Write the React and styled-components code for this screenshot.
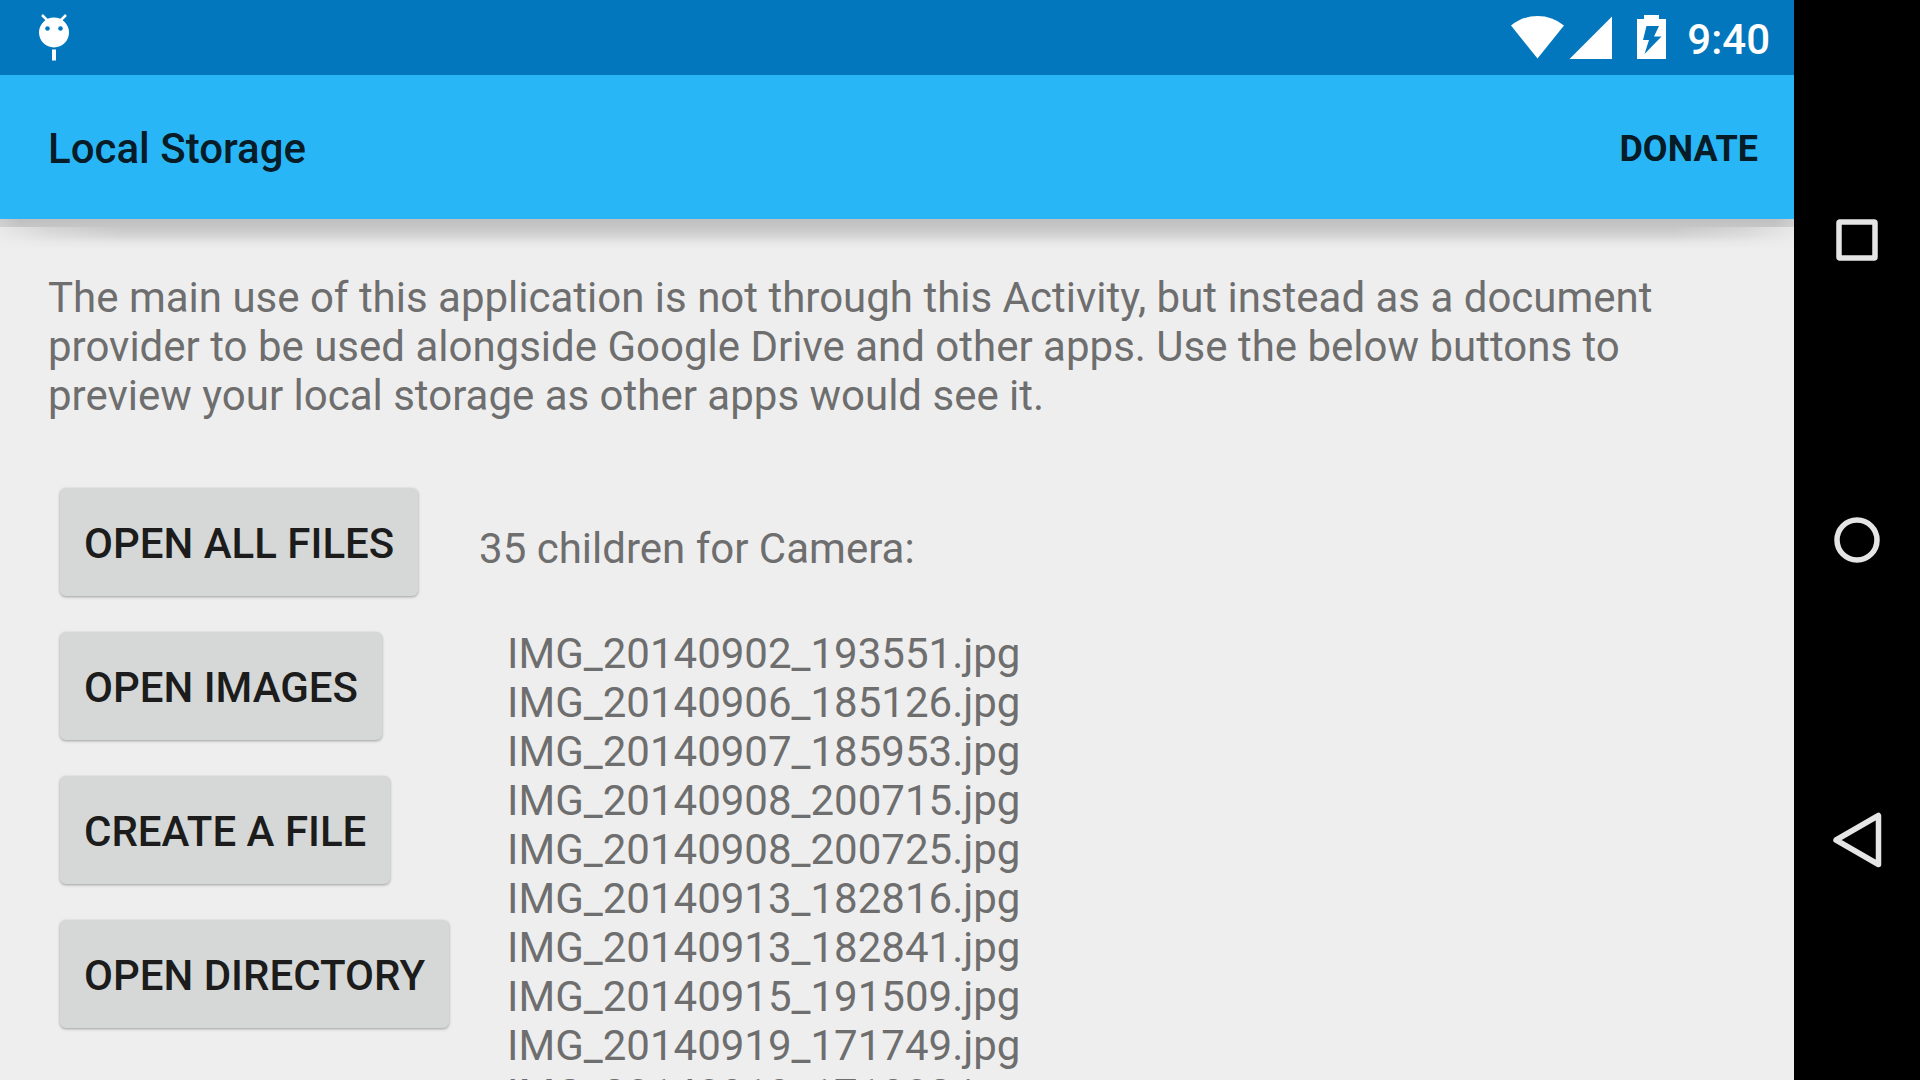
import React from "react";
import styled, { createGlobalStyle } from "styled-components";

const GlobalStyle = createGlobalStyle`
  *, *::before, *::after { box-sizing: border-box; }
  body { margin: 0; background: #eee; overflow: hidden; }
  body, button { font-family: Roboto, "Noto Sans", sans-serif; }
`;

const Screen = styled.div`
  display: flex;
  height: 100vh;
  overflow: hidden;
`;

const Activity = styled.div`
  flex: 1;
  min-width: 0;
  display: flex;
  flex-direction: column;
  overflow: hidden;
`;

const StatusBar = styled.div`
  flex: none;
  display: flex;
  align-items: center;
  justify-content: space-between;
  height: 75px;
  padding: 0 24px 2px 36px;
  background: #0277bd;
  color: #fff;
`;

const StatusIcons = styled.div`
  display: flex;
  align-items: center;
`;

const Clock = styled.time`
  margin-left: 20px;
  padding-top: 6px;
  font-size: 42px;
  line-height: 49px;
  font-weight: 500;
`;

const Toolbar = styled.header`
  flex: none;
  display: flex;
  align-items: center;
  justify-content: space-between;
  height: 144px;
  padding: 0 12px 0 48px;
  background: #29b6f6;
  color: rgba(0, 0, 0, 0.87);
`;

const Title = styled.h1`
  margin: 0;
  padding-top: 2px;
  font-size: 42px;
  line-height: 49px;
  font-weight: 500;
`;

const MenuAction = styled.button`
  border: 0;
  background: none;
  padding: 4px 24px 0;
  color: inherit;
  font-size: 36px;
  line-height: 42px;
  font-weight: 700;
  cursor: pointer;
`;

const ToolbarShadow = styled.div`
  flex: none;
  height: 30px;
  background:
    linear-gradient(to right, rgba(238, 238, 238, 0.85) 0, rgba(238, 238, 238, 0.35) 50px, rgba(238, 238, 238, 0) 120px, rgba(238, 238, 238, 0) calc(100% - 120px), rgba(238, 238, 238, 0.35) calc(100% - 50px), rgba(238, 238, 238, 0.85) 100%) 0 8px / 100% 22px no-repeat,
    linear-gradient(to right, rgba(238, 238, 238, 0.3) 0, rgba(238, 238, 238, 0) 20px, rgba(238, 238, 238, 0) calc(100% - 20px), rgba(238, 238, 238, 0.3) 100%) 0 0 / 100% 8px no-repeat,
    linear-gradient(to bottom, #bfbfbf 0, #c6c6c6 8px, #d3d3d3 16px, #e5e5e5 23px, #eee 30px);
`;

const Content = styled.main`
  flex: 1;
  min-height: 0;
  padding: 24px 48px 0;
  color: #6e6e6e;
  font-size: 42px;
  line-height: 49px;
`;

const Intro = styled.p`
  margin: 0 0 68px;
  max-width: 1650px;
`;

const Columns = styled.div`
  display: flex;
  align-items: flex-start;
  gap: 30px;
`;

const Actions = styled.div`
  display: flex;
  flex-direction: column;
  align-items: flex-start;
  gap: 36px;
  padding-left: 12px;
`;

const ActionButton = styled.button`
  height: 108px;
  padding: 2px 24px 0;
  border: 0;
  border-radius: 6px;
  background: #d6d8d7;
  box-shadow: 0 1px 3px rgba(0, 0, 0, 0.35);
  color: #1c1c1c;
  font-size: 42px;
  line-height: 49px;
  font-weight: 500;
  cursor: pointer;
`;

const Results = styled.section`
  padding-top: 36px;
`;

const ResultsTitle = styled.p`
  margin: 0 0 56px;
`;

const FileList = styled.ul`
  margin: 0;
  padding: 0 0 0 28px;
  list-style: none;
`;

const NavBar = styled.nav`
  flex: none;
  display: flex;
  flex-direction: column;
  align-items: stretch;
  justify-content: center;
  width: 126px;
  background: #000;
`;

const NavButton = styled.button`
  display: flex;
  align-items: center;
  justify-content: center;
  height: 300px;
  padding: 0;
  border: 0;
  background: none;
  cursor: pointer;
`;

const files = [
  "IMG_20140902_193551.jpg",
  "IMG_20140906_185126.jpg",
  "IMG_20140907_185953.jpg",
  "IMG_20140908_200715.jpg",
  "IMG_20140908_200725.jpg",
  "IMG_20140913_182816.jpg",
  "IMG_20140913_182841.jpg",
  "IMG_20140915_191509.jpg",
  "IMG_20140919_171749.jpg",
  "IMG_20140919_171802.jpg",
];

const actions = ["OPEN ALL FILES", "OPEN IMAGES", "CREATE A FILE", "OPEN DIRECTORY"];

const DebugIcon = () => (
  <svg width="36" height="50" viewBox="0 0 36 50" aria-hidden="true">
    <path d="M6 3l5 5M30 3l-5 5" stroke="#fff" strokeWidth="2.5" />
    <circle cx="18" cy="20.500" r="15" fill="#fff" />
    <circle cx="11.500" cy="16.500" r="2.300" fill="#0277bd" />
    <circle cx="24.500" cy="16.500" r="2.300" fill="#0277bd" />
    <path d="M16 37.500h4v11h-4z" fill="#fff" />
  </svg>
);

const SignalIcons = () => (
  <svg width="156" height="46" viewBox="0 0 156 46" aria-hidden="true">
    <g fill="#fff">
      <path d="M0 11.500Q11.500 2 26.500 2T53 11.500L26.500 44.500z" />
      <path d="M101 2.500V45H58.500z" />
      <path d="M133 1h15v4h7v40h-29V5h7z" />
    </g>
    <path d="M135.500 12H148l-5 10.500h7.500L133.500 40l4.500-14h-6z" fill="#0277bd" />
  </svg>
);

const NavIcon = ({ children }) => (
  <svg width="54" height="60" viewBox="0 0 54 60" fill="none" stroke="#e5e5e5" strokeWidth="5.500" strokeLinejoin="round" aria-hidden="true">
    {children}
  </svg>
);

export default function App() {
  return (
    <Screen>
      <GlobalStyle />
      <Activity>
        <StatusBar>
          <DebugIcon />
          <StatusIcons>
            <SignalIcons />
            <Clock>9:40</Clock>
          </StatusIcons>
        </StatusBar>
        <Toolbar>
          <Title>Local Storage</Title>
          <MenuAction type="button">DONATE</MenuAction>
        </Toolbar>
        <ToolbarShadow />
        <Content>
          <Intro>
            The main use of this application is not through this Activity, but instead as a document
            provider to be used alongside Google Drive and other apps. Use the below buttons to
            preview your local storage as other apps would see it.
          </Intro>
          <Columns>
            <Actions>
              {actions.map((label) => (
                <ActionButton key={label} type="button">{label}</ActionButton>
              ))}
            </Actions>
            <Results>
              <ResultsTitle>35 children for Camera:</ResultsTitle>
              <FileList>
                {files.map((name) => (
                  <li key={name}>{name}</li>
                ))}
              </FileList>
            </Results>
          </Columns>
        </Content>
      </Activity>
      <NavBar>
        <NavButton type="button" aria-label="Recent apps">
          <NavIcon><rect x="9" y="12" width="36" height="36" rx="1" /></NavIcon>
        </NavButton>
        <NavButton type="button" aria-label="Home">
          <NavIcon><circle cx="27" cy="30" r="20" /></NavIcon>
        </NavButton>
        <NavButton type="button" aria-label="Back">
          <NavIcon><path d="M48.500 5.500v49L6 30z" /></NavIcon>
        </NavButton>
      </NavBar>
    </Screen>
  );
}
